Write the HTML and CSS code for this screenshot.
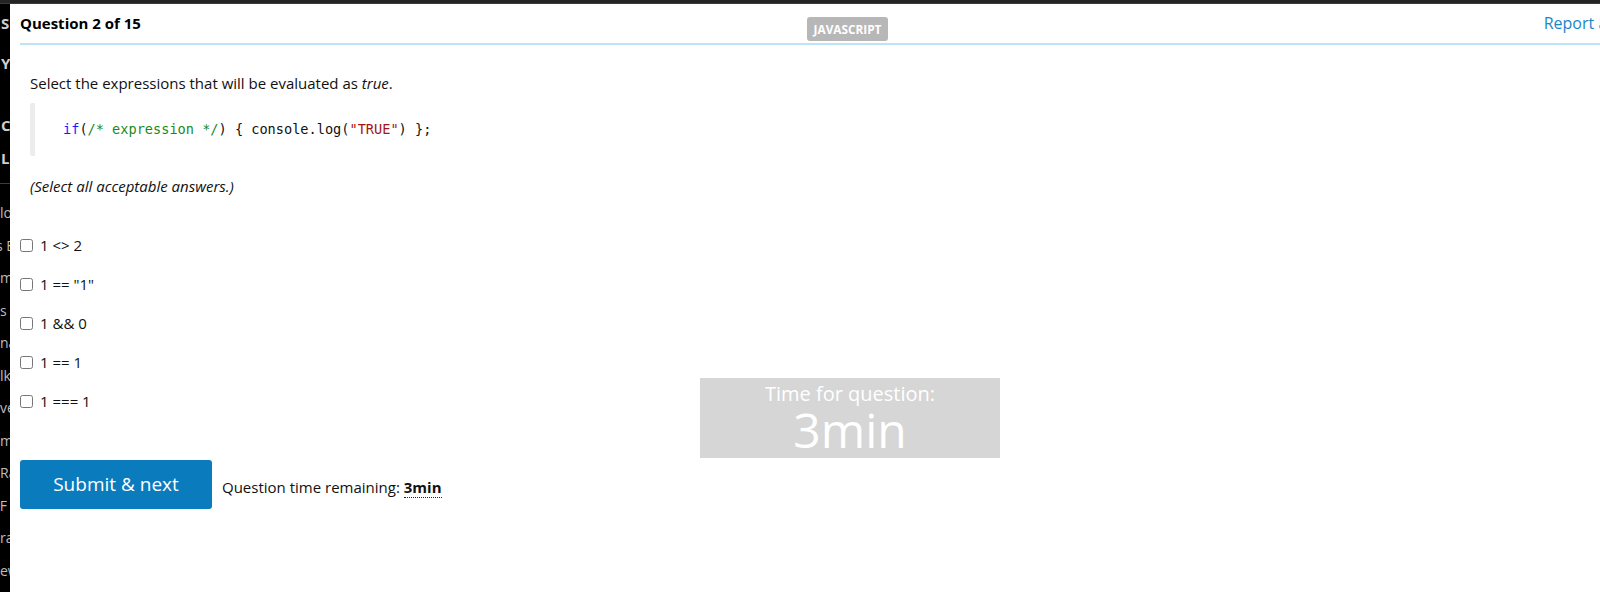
FILE: index.html
```html
<!DOCTYPE html>
<html lang="en">
<head>
<meta charset="utf-8">
<title>Question 2 of 15</title>
<link rel="stylesheet" href="styles.css">
</head>
<body>
<div class="topbar"></div>
<div class="page">
  <aside class="strip">
    <div class="strip-head s1">S</div>
    <div class="strip-head s2">Y</div>
    <div class="strip-head s3">C</div>
    <div class="strip-head s4">L</div>
    <div class="strip-rule"></div>
    <ul class="strip-list">
      <li>lo</li>
      <li class="cut">s E</li>
      <li>m</li>
      <li>s l</li>
      <li>na</li>
      <li>lk</li>
      <li>ve</li>
      <li>m</li>
      <li>Ra</li>
      <li class="cut">&nbsp;F</li>
      <li>ra</li>
      <li>ew</li>
    </ul>
  </aside>
  <main class="modal">
    <header class="modal-header">
      <h1 class="title">Question 2 of 15</h1>
      <span class="badge">JAVASCRIPT</span>
      <a class="report" href="#">Report a problem</a>
    </header>
    <section class="content">
      <p class="question">Select the expressions that will be evaluated as <em>true</em>.</p>
      <pre class="code"><code><span class="kw">if</span>(<span class="cm">/* expression */</span>) { console.log(<span class="str">"TRUE"</span>) };</code></pre>
      <p class="note">(Select all acceptable answers.)</p>
      <ul class="options">
        <li><label><input type="checkbox"><span>1 &lt;&gt; 2</span></label></li>
        <li><label><input type="checkbox"><span>1 == "1"</span></label></li>
        <li><label><input type="checkbox"><span>1 &amp;&amp; 0</span></label></li>
        <li><label><input type="checkbox"><span>1 == 1</span></label></li>
        <li><label><input type="checkbox"><span>1 === 1</span></label></li>
      </ul>
      <div class="actions">
        <button class="submit" type="button">Submit &amp; next</button>
        <span class="remaining">Question time remaining: <abbr class="time">3min</abbr></span>
      </div>
    </section>
    <div class="timer">
      <div class="timer-label">Time for question:</div>
      <div class="timer-value">3min</div>
    </div>
  </main>
</div>
</body>
</html>
```
FILE: styles.css
```css
* { box-sizing: border-box; }
html, body {
  margin: 0;
  padding: 0;
}
body {
  width: 1600px;
  height: 592px;
  overflow: hidden;
  background: #000;
  font-family: "Open Sans", "Noto Sans", sans-serif;
  color: #111;
}
.topbar {
  height: 4px;
  background: #242424;
  border-bottom: 1px solid #3a3a3a;
}
.page {
  display: flex;
  height: 588px;
}
.strip {
  width: 10px;
  flex-shrink: 0;
  overflow: hidden;
  background: #000;
  color: #bdbdbd;
  font-size: 14px;
  white-space: nowrap;
}
.strip-head {
  color: #cfcfcf;
  font-weight: 700;
  font-size: 15px;
  line-height: 20px;
  padding-left: 1px;
}
.s1 { margin-top: 9px; }
.s2 { margin-top: 20px; }
.s3 { margin-top: 42px; }
.s4 { margin-top: 13px; }
.strip-rule {
  margin-top: 15px;
  height: 1px;
  background: #3c3c3c;
}
.strip-list {
  list-style: none;
  margin: 13px 0 0;
  padding: 0;
}
.strip-list li {
  line-height: 32.5px;
  height: 32.5px;
}
.strip-list li.cut { margin-left: -4px; }

.modal {
  position: relative;
  width: 1675px;
  flex-shrink: 0;
  background: #fff;
}
.modal-header {
  margin: 0 10px;
  height: 41px;
  border-bottom: 2px solid #bde3f6;
  display: grid;
  grid-template-columns: 1fr auto 1fr;
  align-items: center;
}
.title {
  margin: 0;
  font-size: 15px;
  font-weight: 700;
  color: #000;
  line-height: 20px;
  margin-top: -1px;
}
.badge {
  align-self: start;
  margin-top: 13px;
  height: 24px;
  line-height: 24px;
  padding: 0 7px;
  background: #b7b7b7;
  color: #fff;
  font-size: 11.8px;
  font-weight: 700;
  border-radius: 3px;
}
.report {
  justify-self: end;
  margin-right: 0;
  margin-top: -2px;
  font-size: 16px;
  color: #1a86c8;
  text-decoration: none;
}
.content {
  padding: 0 10px;
}
.question {
  margin: 28px 0 0 10px;
  font-size: 15px;
  line-height: 20px;
  color: #111;
}
.code {
  margin: 10px 0 0 10px;
  padding: 16px 0 17px 28px;
  border-left: 5px solid #ececec;
  border-radius: 2px;
  font-family: "DejaVu Sans Mono", monospace;
  font-size: 13.6px;
  line-height: 20px;
  color: #111;
}
.kw { color: #1a1aff; }
.cm { color: #1b8a1b; }
.str { color: #a31515; }
.note {
  margin: 20px 0 0 10px;
  font-size: 15px;
  font-style: italic;
  line-height: 20px;
}
.options {
  list-style: none;
  margin: 39px 0 0;
  padding: 0;
  display: flex;
  flex-direction: column;
  gap: 19px;
}
.options li {
  height: 20px;
}
.options label {
  display: flex;
  align-items: center;
  height: 20px;
  font-size: 15px;
  color: #111;
}
.options input {
  margin: 0 7px 0 0;
  width: 13px;
  height: 13px;
}
.actions {
  margin-top: 49px;
  display: flex;
  align-items: center;
  gap: 10px;
}
.submit {
  width: 192px;
  height: 49px;
  border: 0;
  border-radius: 3px;
  background: #0a7bbd;
  color: #fff;
  font-family: "Open Sans", "Noto Sans", sans-serif;
  font-size: 19px;
  padding: 0 0 2px;
}
.remaining {
  font-size: 15px;
  color: #111;
  margin-top: 4px;
}
.time {
  font-weight: 700;
  text-decoration: none;
  border-bottom: 1px dotted #222;
}
.timer {
  position: absolute;
  left: 690px;
  top: 374px;
  width: 300px;
  height: 80px;
  padding-top: 4px;
  background: #d6d6d6;
  color: #fff;
  text-align: center;
}
.timer-label {
  font-size: 20px;
  line-height: 24px;
}
.timer-value {
  font-size: 48px;
  line-height: 47px;
}
```
